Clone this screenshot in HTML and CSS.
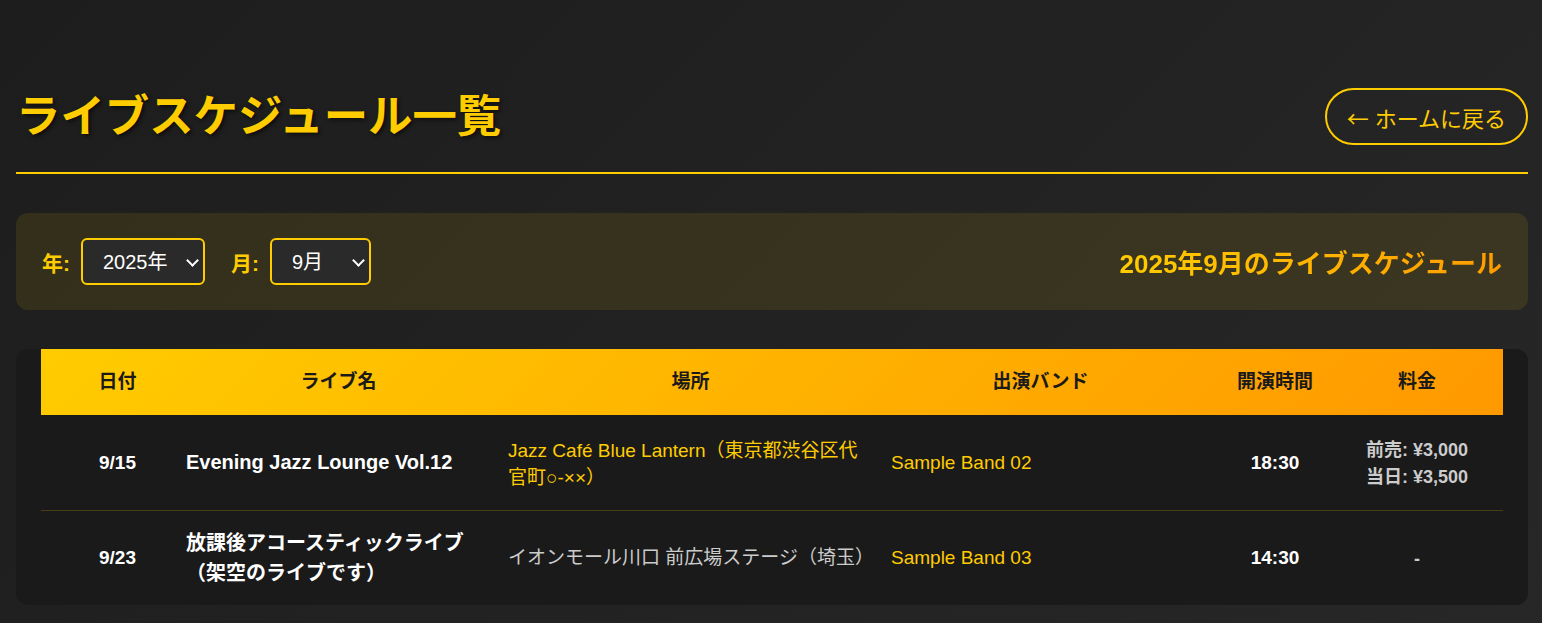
FILE: index.html
```html
<!DOCTYPE html>
<html lang="ja">
<head>
  <meta charset="UTF-8">
  <meta name="viewport" content="width=device-width, initial-scale=1.0">
  <title>ライブスケジュール一覧</title>
  <link rel="stylesheet" href="styles.css">
</head>
<body>
  <div class="container">
    <header class="page-header">
      <h1 class="page-title">ライブスケジュール一覧</h1>
      <a href="#" class="back-btn"><span class="arrow">←</span><span>ホームに戻る</span></a>
    </header>

    <section class="filter-bar">
      <div class="filter-controls">
        <label class="filter-label" for="yearSelect">年:</label>
        <span class="select-wrap">
          <select id="yearSelect" class="select-year"></select>
        </span>
        <label class="filter-label" for="monthSelect">月:</label>
        <span class="select-wrap">
          <select id="monthSelect" class="select-month"></select>
        </span>
      </div>
      <h2 class="filter-title" id="filterTitle">2025年9月のライブスケジュール</h2>
    </section>

    <section class="schedule-wrap">
      <table id="scheduleTable">
        <colgroup>
          <col class="col-date">
          <col class="col-title">
          <col class="col-venue">
          <col class="col-band">
          <col class="col-time">
          <col class="col-price">
        </colgroup>
        <thead>
          <tr>
            <th>日付</th>
            <th>ライブ名</th>
            <th>場所</th>
            <th>出演バンド</th>
            <th>開演時間</th>
            <th>料金</th>
          </tr>
        </thead>
        <tbody>
          <!-- rows are added by the script -->
        </tbody>
      </table>
    </section>
  </div>

  <script>
    const lives = [
      {
        date: "9/15",
        title: "Evening Jazz Lounge Vol.12",
        venue: "Jazz Café Blue Lantern（東京都渋谷区代官町○-××）",
        venueLink: true,
        band: "Sample Band 02",
        time: "18:30",
        price: ["前売: ¥3,000", "当日: ¥3,500"]
      },
      {
        date: "9/23",
        title: "放課後アコースティックライブ（架空のライブです）",
        venue: "イオンモール川口 前広場ステージ（埼玉）",
        venueLink: false,
        band: "Sample Band 03",
        time: "14:30",
        price: ["-"]
      }
    ];

    // year / month selects
    const yearSelect = document.getElementById("yearSelect");
    [2024, 2025, 2026].forEach(y => {
      const opt = document.createElement("option");
      opt.value = y;
      opt.textContent = y + "年";
      if (y === 2025) opt.selected = true;
      yearSelect.appendChild(opt);
    });

    const monthSelect = document.getElementById("monthSelect");
    for (let m = 1; m <= 12; m++) {
      const opt = document.createElement("option");
      opt.value = m;
      opt.textContent = m + "月";
      if (m === 9) opt.selected = true;
      monthSelect.appendChild(opt);
    }

    // table rows
    const tbody = document.querySelector("#scheduleTable tbody");
    lives.forEach(live => {
      const tr = document.createElement("tr");

      const date = document.createElement("td");
      date.className = "cell-date";
      date.textContent = live.date;
      tr.appendChild(date);

      const title = document.createElement("td");
      title.className = "cell-title";
      title.textContent = live.title;
      tr.appendChild(title);

      const venue = document.createElement("td");
      venue.className = live.venueLink ? "cell-venue venue-link" : "cell-venue";
      venue.textContent = live.venue;
      tr.appendChild(venue);

      const band = document.createElement("td");
      band.className = "cell-band";
      band.textContent = live.band;
      tr.appendChild(band);

      const time = document.createElement("td");
      time.className = "cell-time";
      time.textContent = live.time;
      tr.appendChild(time);

      const price = document.createElement("td");
      price.className = "cell-price";
      live.price.forEach(p => {
        const line = document.createElement("div");
        line.textContent = p;
        price.appendChild(line);
      });
      tr.appendChild(price);

      tbody.appendChild(tr);
    });
  </script>
</body>
</html>
```

FILE: styles.css
```css
* {
  box-sizing: border-box;
}
body {
  margin: 0;
  min-height: 100vh;
  font-family: "Liberation Sans", "Noto Sans CJK JP", sans-serif;
  color: #fff;
  background: linear-gradient(135deg, #1d1d1d 0%, #272727 100%);
}
.container {
  padding: 40px 14px 40px 16px;
}

/* header */
.page-header {
  display: flex;
  justify-content: space-between;
  align-items: center;
  padding: 48px 0 27px;
  border-bottom: 2px solid #ffcc00;
}
.page-title {
  margin: 0;
  font-size: 44.4px;
  line-height: 53px;
  color: #ffcc00;
  text-shadow: 2px 2px 4px rgba(0, 0, 0, 0.6);
}
.back-btn {
  display: flex;
  align-items: center;
  gap: 6px;
  height: 57px;
  padding: 0 20px;
  color: #ffcc00;
  text-decoration: none;
  font-size: 22px;
  border: 2px solid #ffcc00;
  border-radius: 30px;
}
.back-btn .arrow {
  font-family: "Noto Sans CJK JP", sans-serif;
}

/* filter */
.filter-bar {
  margin-top: 39px;
  display: flex;
  justify-content: space-between;
  align-items: center;
  padding: 25px 26px;
  background: rgba(255, 204, 0, 0.1);
  border-radius: 12px;
}
.filter-controls {
  display: flex;
  align-items: center;
}
.filter-label {
  font-size: 21px;
  font-weight: bold;
  color: #ffcc00;
  margin-right: 11px;
}
.select-wrap {
  position: relative;
  display: inline-block;
  margin-right: 26px;
}
.select-wrap::after {
  content: "";
  position: absolute;
  right: 8px;
  top: 18px;
  width: 7px;
  height: 7px;
  border-right: 2px solid #fff;
  border-bottom: 2px solid #fff;
  transform: rotate(45deg);
  pointer-events: none;
}
.select-wrap select {
  appearance: none;
  -webkit-appearance: none;
  display: block;
  height: 47px;
  padding: 0 30px 0 20px;
  font-family: "Liberation Sans", "Noto Sans CJK JP", sans-serif;
  font-size: 20px;
  color: #fff;
  background: #2a2a2a;
  border: 2px solid #ffcc00;
  border-radius: 6px;
}
.select-year {
  width: 124px;
}
.select-month {
  width: 101px;
}
.filter-title {
  margin: 0;
  font-size: 26px;
  font-weight: bold;
  background: linear-gradient(90deg, #ffcc00, #ff9c00);
  -webkit-background-clip: text;
  background-clip: text;
  color: transparent;
}

/* table */
.schedule-wrap {
  margin-top: 39px;
  padding: 0 25px;
  background: #1a1a1a;
  border-radius: 12px;
  overflow: hidden;
}
table {
  width: 100%;
  border-collapse: collapse;
  table-layout: fixed;
}
.col-date { width: 137px; }
.col-title { width: 321px; }
.col-venue { width: 383px; }
.col-band { width: 317px; }
.col-time { width: 152px; }
.col-price { width: 152px; }

thead tr {
  background: linear-gradient(135deg, #ffcc00 0%, #ff9900 100%);
}
th {
  padding: 20px 8px;
  font-size: 19px;
  line-height: 26px;
  font-weight: bold;
  color: #1a1a1a;
  text-align: center;
}
td {
  padding: 17px 8px;
  font-size: 19px;
  line-height: 27px;
  vertical-align: middle;
  border-bottom: 1px solid rgba(255, 204, 0, 0.2);
}
tbody tr {
  height: 95px;
}
tbody tr:last-child {
  height: 94px;
}
tbody tr:last-child td {
  border-bottom: none;
}
th:first-child,
td:first-child {
  padding-left: 24px;
}
th:last-child,
td:last-child {
  padding-right: 28px;
}
.cell-date {
  text-align: center;
  font-weight: bold;
}
.cell-title {
  font-size: 20px;
  line-height: 30px;
  font-weight: bold;
}
.cell-venue {
  padding-left: 9px;
  padding-right: 7px;
  color: #ccc;
}
.venue-link {
  padding-top: 20px;
  color: #ffcc00;
}
.cell-band {
  padding-left: 9px;
  color: #ffcc00;
}
.cell-time {
  text-align: center;
  font-weight: bold;
}
.cell-price {
  padding-top: 20px;
  text-align: center;
  font-size: 18px;
  font-weight: bold;
  color: #ccc;
}
```
